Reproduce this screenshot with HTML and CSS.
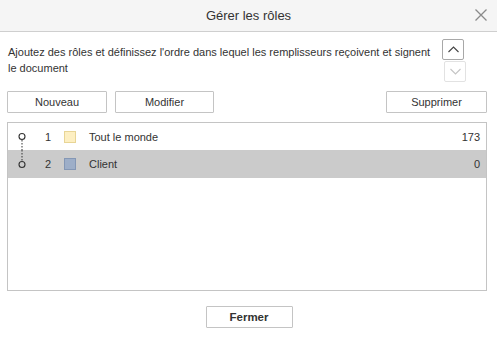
FILE: index.html
```html
<!DOCTYPE html>
<html lang="fr">
<head>
<meta charset="utf-8">
<title>Gérer les rôles</title>
<link rel="stylesheet" href="styles.css">
</head>
<body>
<div class="dialog">
  <div class="header">
    <span class="title">Gérer les rôles</span>
    <button class="close" aria-label="Fermer">
      <svg width="12" height="12" viewBox="0 0 12 12"><path d="M0.5 0.5 L11.5 11.5 M11.5 0.5 L0.5 11.5" stroke="#8a8a8a" stroke-width="1.3" fill="none"/></svg>
    </button>
  </div>
  <div class="intro">
    <p class="desc">Ajoutez des rôles et définissez l'ordre dans lequel les remplisseurs reçoivent et signent le document</p>
    <div class="arrows">
      <button class="arrow up" aria-label="Monter">
        <svg width="11" height="7" viewBox="0 0 11 7"><path d="M0.5 6 L5.5 1 L10.5 6" stroke="#444" stroke-width="1.1" fill="none"/></svg>
      </button>
      <button class="arrow down" aria-label="Descendre">
        <svg width="11" height="7" viewBox="0 0 11 7"><path d="M0.5 1 L5.5 6 L10.5 1" stroke="#c4c4c4" stroke-width="1.1" fill="none"/></svg>
      </button>
    </div>
  </div>
  <div class="toolbar">
    <button class="btn w-nouveau">Nouveau</button>
    <button class="btn w-modifier">Modifier</button>
    <span class="spacer"></span>
    <button class="btn w-supprimer">Supprimer</button>
  </div>
  <div class="list">
    <div class="row">
      <svg class="node" width="14" height="27" viewBox="0 0 14 27"><circle cx="7" cy="13.5" r="3" stroke="#333" stroke-width="1.1" fill="none"/><line x1="7" y1="17" x2="7" y2="27" stroke="#333" stroke-width="1" stroke-dasharray="1.5 1.5"/></svg>
      <span class="num">1</span>
      <span class="swatch yellow"></span>
      <span class="name">Tout le monde</span>
      <span class="count">173</span>
    </div>
    <div class="row selected">
      <svg class="node" width="14" height="28" viewBox="0 0 14 28"><line x1="7" y1="0" x2="7" y2="11" stroke="#333" stroke-width="1" stroke-dasharray="1.5 1.5"/><circle cx="7" cy="14.5" r="3" stroke="#333" stroke-width="1.1" fill="none"/></svg>
      <span class="num">2</span>
      <span class="swatch blue"></span>
      <span class="name">Client</span>
      <span class="count">0</span>
    </div>
  </div>
  <div class="footer">
    <button class="btn primary">Fermer</button>
  </div>
</div>
</body>
</html>
```
FILE: styles.css
```css
* { box-sizing: border-box; }
html, body {
  margin: 0;
  padding: 0;
  background: #fff;
}
body {
  font-family: "Liberation Sans", Arial, sans-serif;
  font-size: 11px;
  color: #333;
}
.dialog {
  width: 497px;
  height: 342px;
  background: #fff;
}
.header {
  height: 32px;
  background: #f5f5f5;
  border-bottom: 1px solid #cfcfcf;
  display: flex;
  align-items: center;
  justify-content: center;
  position: relative;
}
.title {
  font-size: 13px;
  color: #333;
  margin-top: -1px;
}
.close {
  position: absolute;
  right: 10px;
  top: 9px;
  width: 12px;
  height: 12px;
  padding: 0;
  border: none;
  background: transparent;
  display: flex;
}
.intro {
  display: flex;
  padding: 7px 10px 0 8px;
}
.desc {
  margin: 5px 0 0 0;
  width: 428px;
  line-height: 16px;
  font-size: 11px;
}
.arrows {
  display: flex;
  flex-direction: column;
  margin-left: 6px;
  gap: 1px;
}
.arrow {
  width: 22px;
  height: 21px;
  padding: 0;
  background: #fff;
  border: 1px solid #a8a8a8;
  border-radius: 2px;
  display: flex;
  align-items: center;
  justify-content: center;
}
.arrow.down {
  margin-left: 2px;
  border-color: #e2e2e2;
}
.toolbar {
  display: flex;
  padding: 0 10px 0 7px;
  margin-top: 9px;
}
.spacer { flex: 1; }
.btn {
  height: 22px;
  padding: 0;
  background: #fff;
  border: 1px solid #c4c4c4;
  border-radius: 1px;
  font-family: "Liberation Sans", Arial, sans-serif;
  font-size: 11px;
  color: #333;
}
.w-nouveau { width: 100px; }
.w-modifier { width: 99px; margin-left: 8px; }
.w-supprimer { width: 101px; }
.list {
  margin: 9px 10px 0 7px;
  height: 169px;
  border: 1px solid #c4c4c4;
}
.row {
  display: flex;
  align-items: center;
  height: 28px;
  padding-right: 6px;
}
.row:first-child { height: 27px; }
.row.selected { background: #cbcbcb; }
.node {
  margin-left: 7px;
  flex: none;
}
.num {
  width: 22px;
  text-align: right;
}
.swatch {
  width: 12px;
  height: 12px;
  margin-left: 13px;
  border: 1px solid;
}
.swatch.yellow { background: #fdefc2; border-color: #e8d596; }
.swatch.blue { background: #9daec8; border-color: #8497b5; }
.name {
  margin-left: 13px;
  flex: 1;
}
.count { text-align: right; }
.footer {
  display: flex;
  justify-content: center;
  margin-top: 15px;
}
.btn.primary {
  width: 87px;
  font-weight: bold;
  font-size: 11.5px;
  margin-left: 1px;
}
```
